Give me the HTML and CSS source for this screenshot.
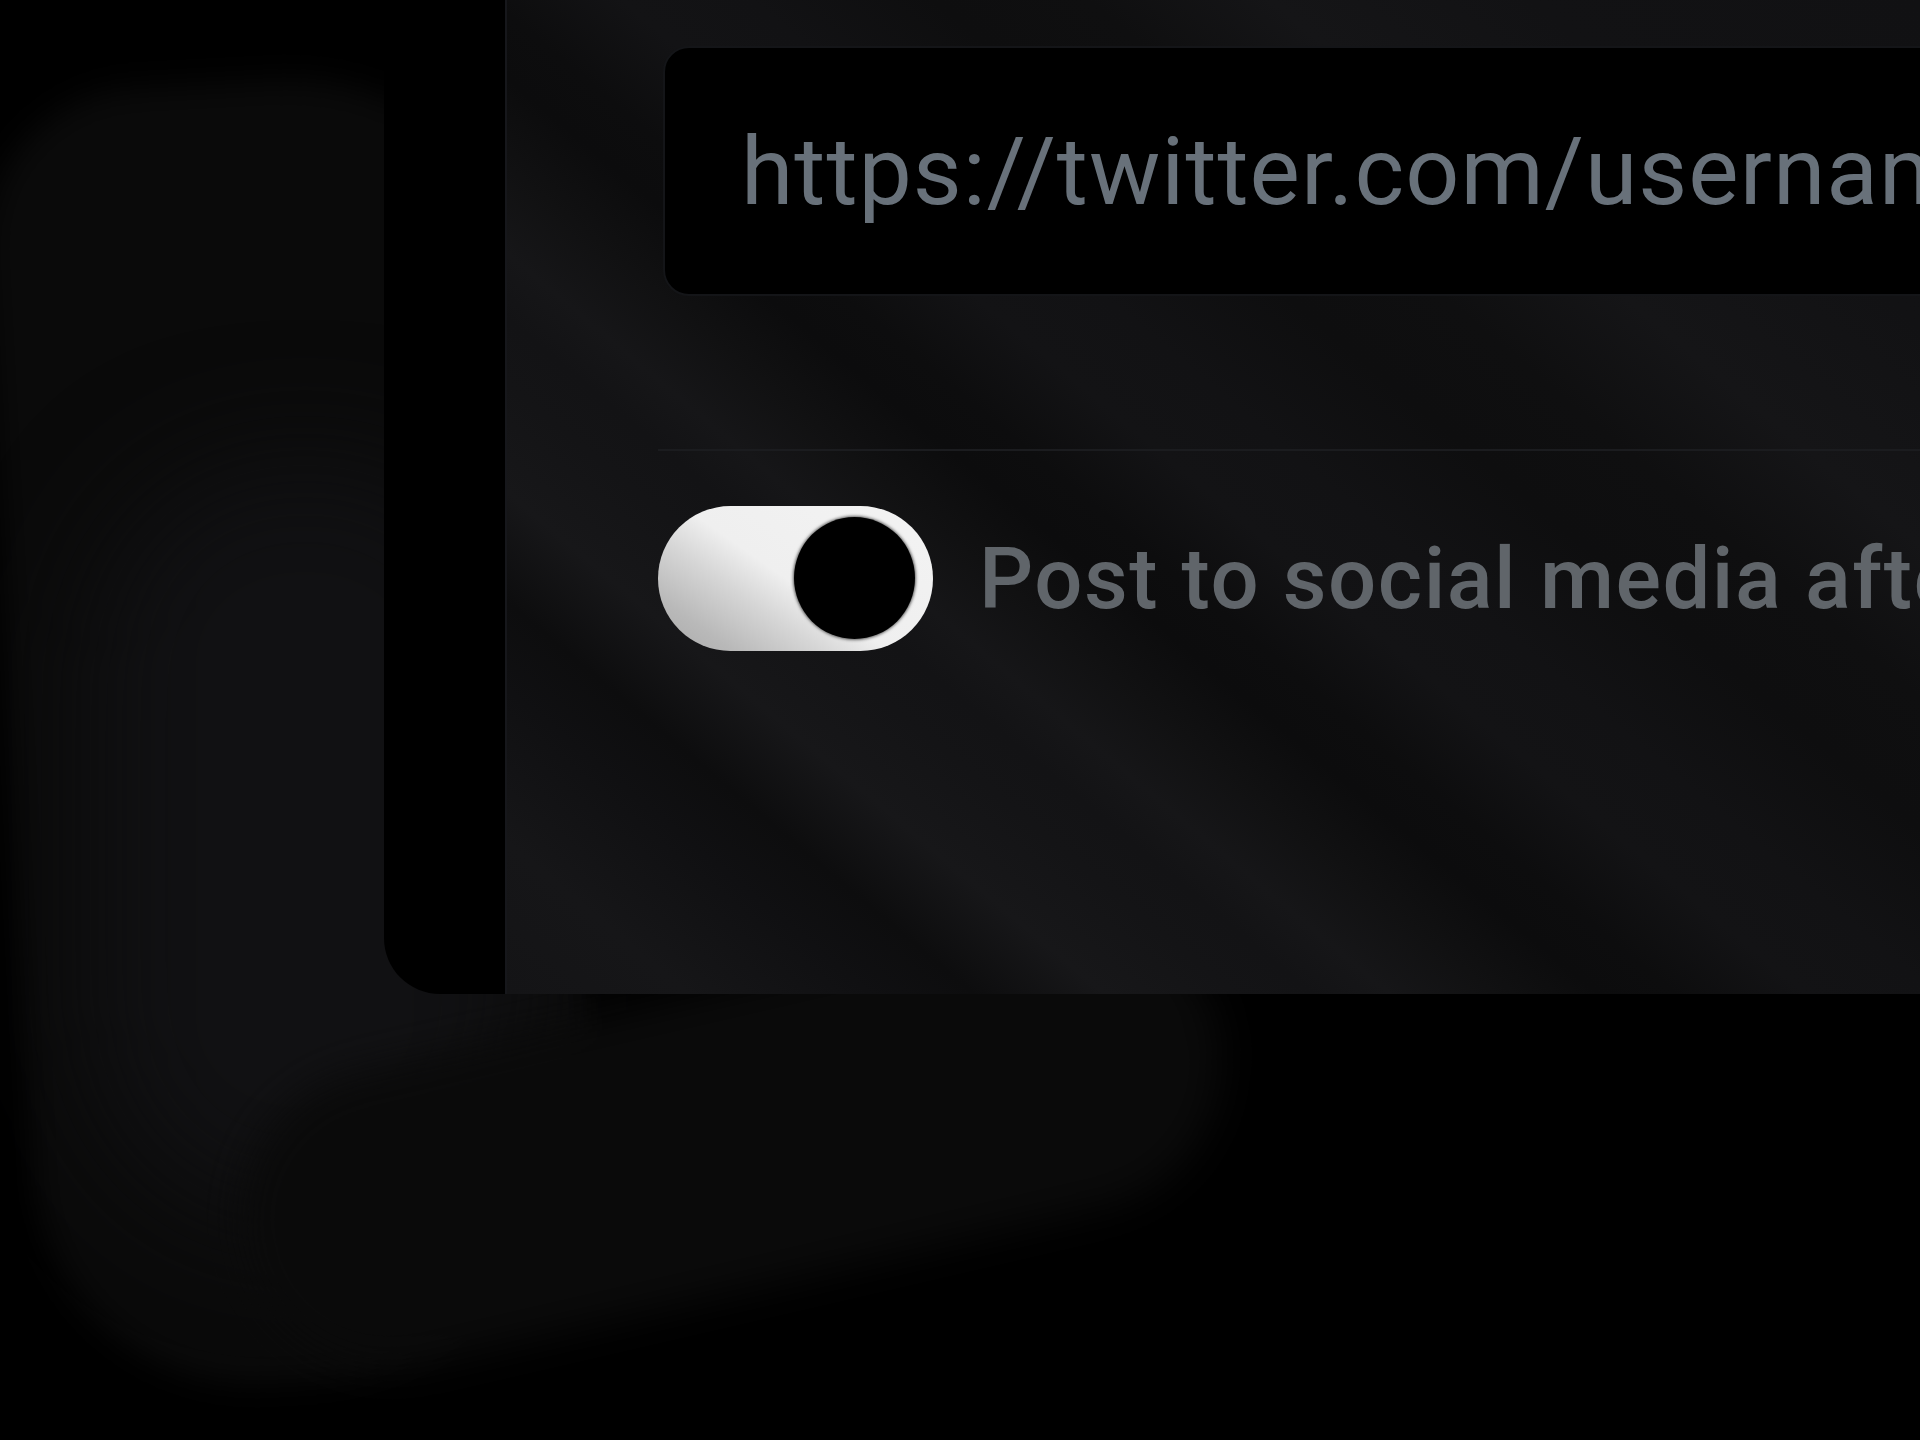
FILE: index.html
```html
<!DOCTYPE html>
<html lang="en">
<head>
<meta charset="utf-8">
<title>Social post settings</title>
<link rel="stylesheet" href="styles.css">
</head>
<body>
<div class="glow" aria-hidden="true"><span class="g1"></span><span class="g2"></span><span class="g3"></span></div>
<div class="card">
  <div class="rail"></div>
  <div class="panel">
    <div class="field">
      <input class="url" type="text" placeholder="https://twitter.com/username">
    </div>
    <div class="divider"></div>
    <label class="option">
      <span class="switch"><span class="knob"></span></span>
      <span class="label-text">Post to social media after publishing</span>
    </label>
  </div>
</div>
</body>
</html>
```
FILE: styles.css
```css
* { box-sizing: border-box; }
html, body { margin: 0; padding: 0; }
body {
  width: 1920px;
  height: 1440px;
  overflow: hidden;
  position: relative;
  background: #000;
  font-family: Roboto, "Liberation Sans", sans-serif;
}
.glow { position: absolute; inset: 0; pointer-events: none; }
.glow span { position: absolute; display: block; }
.g1 {
  left: 10px; top: 80px; width: 560px; height: 1300px;
  border-radius: 160px 260px 300px 220px;
  background: #0a0a0a;
  transform: rotate(-3deg);
  filter: blur(16px);
}
.g2 {
  left: 90px; top: 460px; width: 430px; height: 760px;
  border-radius: 200px;
  background: #111113;
  filter: blur(60px);
}
.g3 {
  left: 230px; top: 990px; width: 1000px; height: 300px;
  border-radius: 150px;
  background: #0a0a0a;
  transform: rotate(-13deg);
  filter: blur(20px);
}
.card {
  position: relative;
  margin-left: 384px;
  height: 994px;
  display: flex;
  background: #000;
  border-bottom-left-radius: 56px;
}
.rail { width: 121px; flex: none; }
.panel {
  flex: 1;
  min-width: 0;
  border-left: 2px solid #16171b;
  padding: 46px 0 0 151px;
  background: linear-gradient(40deg,
    #141416 0%, #161618 7%, #101012 14%, #0d0d0e 18%, #171719 23%,
    #141416 28%, #131315 31%, #161618 34%, #111112 38%, #0c0c0d 42%,
    #0d0d0e 45%, #131315 50%, #121214 55%, #0e0e0f 62%, #0f0f10 68%,
    #151517 75%, #121214 85%, #111113 100%);
}
.field { margin-left: 5px; width: 1500px; }
.url {
  display: block;
  width: 100%;
  height: 250px;
  border: 2px solid #141518;
  border-radius: 26px;
  background: #000;
  padding: 0 0 0 76px;
  font-family: Roboto, "Liberation Sans", sans-serif;
  font-size: 95px;
  font-weight: 400;
  letter-spacing: 1px;
  color: #c8ccd0;
  outline: none;
}
.url::placeholder { color: #68717a; opacity: 1; }
.divider {
  height: 2px;
  width: 1400px;
  margin-top: 153px;
  background: #1b1c1f;
}
.option {
  display: flex;
  align-items: center;
  gap: 46px;
  margin-top: 55px;
  white-space: nowrap;
}
.switch {
  position: relative;
  flex: none;
  width: 275px;
  height: 145px;
  border-radius: 73px;
  background: linear-gradient(215deg, #f3f3f3 0%, #efefef 52%, #d6d6d6 66%, #b9b9b9 84%, #a9a9a9 100%);
}
.knob {
  position: absolute;
  left: 136px;
  top: 11px;
  width: 121px;
  height: 122px;
  border-radius: 50%;
  background: #000;
  box-shadow: 0 0 3px 1px rgba(60,60,60,0.8);
}
.label-text {
  font-size: 85px;
  font-weight: 500;
  letter-spacing: 1.5px;
  color: #60656a;
}
```
